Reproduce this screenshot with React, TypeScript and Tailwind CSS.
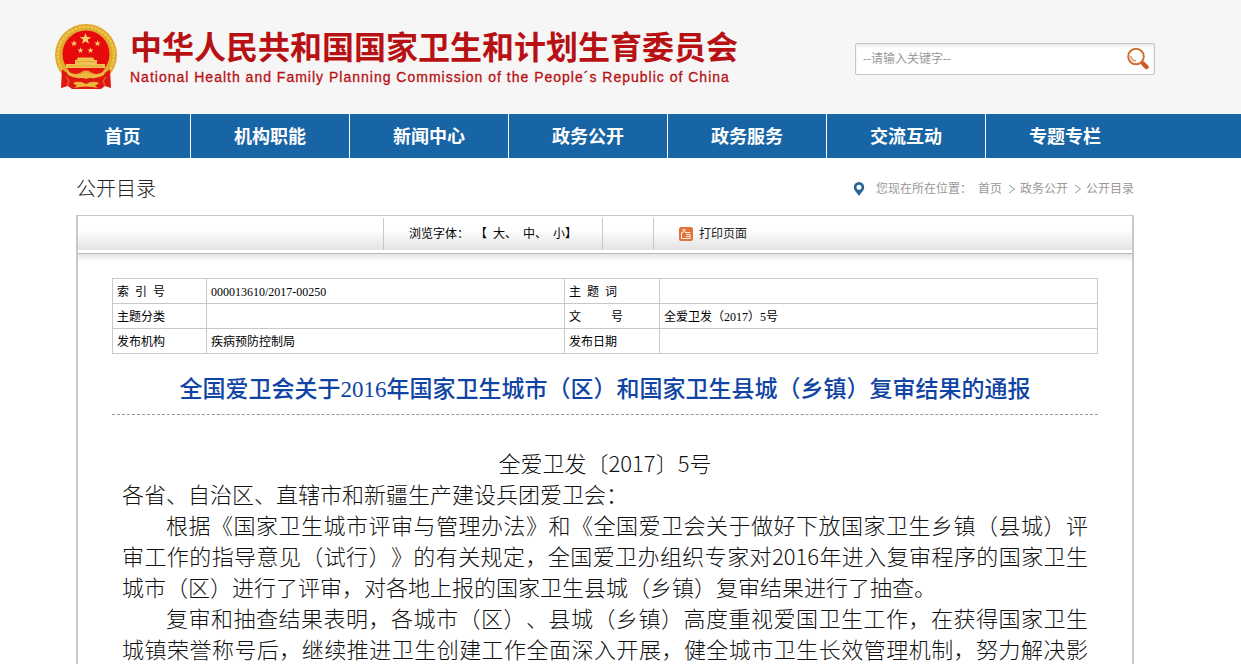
import React from 'react';

const navItems = ['机构职能', '新闻中心', '政务公开', '政务服务', '交流互动', '专题专栏'];

const infoRows = [
  ['索\u00a0\u00a0引\u00a0\u00a0号', '000013610/2017-00250', '主\u00a0\u00a0题\u00a0\u00a0词', ''],
  ['主题分类', '', '文\u3000\u3000\u00a0\u00a0号', '全爱卫发（2017）5号'],
  ['发布机构', '疾病预防控制局', '发布日期', ''],
];

const star = (cx: number, cy: number, r: number) =>
  Array.from({ length: 10 }, (_, i) => {
    const a = (Math.PI / 5) * i - Math.PI / 2;
    const d = i % 2 ? r * 0.4 : r;
    return `${(cx + d * Math.cos(a)).toFixed(2)},${(cy + d * Math.sin(a)).toFixed(2)}`;
  }).join(' ');

const Emblem = () => (
  <svg viewBox="0 0 62 66" className="w-[62px] h-[66px] shrink-0" aria-hidden="true">
    {/* wreath */}
    <circle cx="31" cy="31" r="31" fill="#e0a92c" />
    <circle cx="31" cy="31" r="28" fill="none" stroke="#edc650" strokeWidth="2.5" strokeDasharray="3 1" />
    <circle cx="31" cy="30" r="23.5" fill="#e60a0c" />
    {/* stars */}
    <polygon points={star(30.5, 15, 6)} fill="#f8cc6a" />
    <polygon points={star(19, 19.5, 3.4)} fill="#f8cc6a" />
    <polygon points={star(42.5, 19.5, 3.4)} fill="#f8cc6a" />
    <polygon points={star(25.5, 26.5, 3.2)} fill="#f8cc6a" />
    <polygon points={star(35.5, 26.5, 3.2)} fill="#f8cc6a" />
    {/* gate */}
    <path d="M23 33.5 H38 L39.500 36 H42 V40 H50 V44 H11 V40 H20 V36 H21.500 Z" fill="#f0c252" />
    <path d="M21 37.500 H41 M14 42 H48" stroke="#dc9c34" strokeWidth="0.8" />
    {/* drapery and cogwheel */}
    <path d="M7 45 Q12 50 18 51 L31 55 L44 51 Q50 50 55 45 L56 64 L50 62 L46 65 H17 L13 62 L6 64 Z" fill="#dc1812" />
    <path d="M12 44 H50 Q46 52 38 54 L31 50 L24 54 Q16 52 12 44 Z" fill="#e3170f" />
    <path d="M11 45 Q17 52 25 49 Q31 44 37 49 Q45 52 51 45 L49 51 Q42 55 36 54 H26 Q20 55 13 51 Z" fill="#edb840" />
    <path d="M25 50 Q31 46 37 50" fill="none" stroke="#c77c20" strokeWidth="0.8" strokeDasharray="1.500 1" />
    <path d="M11 53 L14 57 L12 62 M51 53 L48 57 L50 62" fill="none" stroke="#f2512c" strokeWidth="1.500" />
    <path d="M18 59 Q24 56 31 60 Q38 56 44 59 L40 62 L43 64 Q31 61 19 64 L22 62 Z" fill="#efb63c" />
  </svg>
);

const SearchIcon = () => (
  <svg viewBox="0 0 24 24" className="w-6 h-6" aria-hidden="true">
    <circle cx="10" cy="9.500" r="7.800" fill="none" stroke="#d07030" strokeWidth="2" />
    <path d="M4.800 9 Q5.500 13.500 10 14" fill="none" stroke="#d98a58" strokeWidth="1.500" />
    <path d="M15.500 15 L17 16.500" stroke="#cc5a20" strokeWidth="2.500" />
    <path d="M17.500 17 L20.500 20" stroke="#cc5a20" strokeWidth="4.500" strokeLinecap="round" />
  </svg>
);

const PinIcon = () => (
  <svg viewBox="0 0 12 14" className="w-3 h-[14px]" aria-hidden="true">
    <path
      d="M6 0 A5.200 5.200 0 0 0 0.800 5.200 C0.800 8.500 4 10.500 6 14 C8 10.500 11.200 8.500 11.200 5.200 A5.200 5.200 0 0 0 6 0 Z M6 2.800 A2.500 2.500 0 1 1 6 7.800 A2.500 2.500 0 1 1 6 2.800 Z"
      fill="#266398"
      fillRule="evenodd"
    />
  </svg>
);

const PrintIcon = () => (
  <svg viewBox="0 0 14 14" className="w-[14px] h-[14px]" aria-hidden="true">
    <rect width="14" height="14" rx="2" fill="#e2733c" />
    <path
      d="M2.500 11.500 V5.500 H4 V2.500 H6 V5.500 H11.500 M2.500 11.500 H11.500 M7 7.500 H11 V11 M7 9.500 H11"
      fill="none"
      stroke="#ffe9dc"
      strokeWidth="1"
    />
  </svg>
);

const Chevron = () => (
  <svg viewBox="0 0 8 10" className="w-2 h-[10px] ml-[6px] mr-1" aria-hidden="true">
    <path d="M1 1 L6.500 5 L1 9" fill="none" stroke="#999" strokeWidth="1" />
  </svg>
);

export default function App() {
  return (
    <div className="h-screen overflow-hidden flex flex-col bg-white text-black text-xs font-['Liberation_Serif','Noto_Sans_CJK_SC',sans-serif]">
      <header className="bg-[#f6f6f6] pr-[31px]">
        <div className="mx-auto max-w-[1100px] h-[114px] pt-1 flex items-center justify-between">
          <a href="#" className="flex items-center gap-[13px] pb-1 text-[#b81114]">
            <Emblem />
            <div>
              <h1 className="text-[32px] leading-10 font-bold font-['Noto_Sans_CJK_SC',sans-serif]">
                中华人民共和国国家卫生和计划生育委员会
              </h1>
              <p className="text-sm leading-6 tracking-[1px] [-webkit-text-stroke:0.3px] font-['Liberation_Sans',sans-serif]">
                National Health and Family Planning Commission of the People´s Republic of China
              </p>
            </div>
          </a>
          <form className="flex items-center w-[300px] h-8 pl-[7px] pr-1 bg-white border border-[#c6c6c6] rounded-xs shadow-[inset_0_2px_3px_#e8e8e8]">
            <input
              type="text"
              aria-label="关键字"
              placeholder="--请输入关键字--"
              className="flex-1 min-w-0 outline-none bg-transparent placeholder:text-[#999]"
            />
            <button type="button" aria-label="搜索">
              <SearchIcon />
            </button>
          </form>
        </div>
      </header>

      <nav className="bg-[#1865a6] pr-[31px]">
        <div className="mx-auto max-w-[1100px] h-11 flex text-lg font-bold text-white">
          <a href="#" className="w-[135px] pt-px flex items-center justify-center">首页</a>
          {navItems.map((item) => (
            <a key={item} href="#" className="w-[159px] pt-px flex items-center justify-center border-l border-white">
              {item}
            </a>
          ))}
        </div>
      </nav>

      <main className="flex-1 flex flex-col pr-[31px]">
        <div className="mx-auto w-full max-w-[1058px] flex-1 flex flex-col">
          <div className="h-[57px] pt-1 flex items-center justify-between">
            <h2 className="text-xl font-light text-[#222]">公开目录</h2>
            <div className="flex items-center text-[#999]">
              <PinIcon />
              <span className="ml-[11px] mr-[6px]">您现在所在位置：</span>
              <a href="#">首页</a>
              <Chevron />
              <a href="#">政务公开</a>
              <Chevron />
              <a href="#">公开目录</a>
            </div>
          </div>

          <div className="flex-1 border-x-2 border-t border-[#c8c8c8]">
            <div className="h-[38px] pb-[3px] border-b border-[#b8b8b8]">
              <div className="h-full pt-[2px] flex bg-linear-to-b from-white from-40% to-[#e3e3e3]">
                <div className="w-[305px]" />
                <div className="w-[219px] flex items-center justify-center gap-[6px] border-l border-[#c8c8c8] [text-spacing-trim:space-all]">
                  <span>浏览字体：</span>
                  <span className="flex gap-[6px]">
                    <span>【</span>
                    <button type="button">大、</button>
                    <button type="button">中、</button>
                    <button type="button">小】</button>
                  </span>
                </div>
                <div className="w-[51px] border-l border-[#c8c8c8]" />
                <div className="flex items-center pl-[25px] border-l border-[#c8c8c8]">
                  <button type="button" className="flex items-center gap-[6px] text-[#222]">
                    <PrintIcon />
                    打印页面
                  </button>
                </div>
              </div>
            </div>
            <div className="h-2 bg-linear-to-b from-[#e6e6e6] to-white" />

            <div className="px-[34px] pt-4">
              <table className="w-full table-fixed border-collapse">
                <colgroup>
                  <col className="w-[94px]" />
                  <col className="w-[358px]" />
                  <col className="w-[95px]" />
                  <col />
                </colgroup>
                <tbody>
                  {infoRows.map((row) => (
                    <tr key={row[0]} className="h-[25px]">
                      {row.map((cell, i) =>
                        i % 2 === 0 ? (
                          <th key={i} scope="row" className="border border-[#c8c8c8] px-1 pt-px text-left font-normal">{cell}</th>
                        ) : (
                          <td key={i} className="border border-[#c8c8c8] px-1 pt-px">{cell}</td>
                        )
                      )}
                    </tr>
                  ))}
                </tbody>
              </table>

              <h3 className="pt-5 pb-2 text-center text-[23px] leading-8 font-medium text-[#0f44a5] border-b border-dashed border-[#999] [text-spacing-trim:space-all]">
                全国爱卫会关于2016年国家卫生城市（区）和国家卫生县城（乡镇）复审结果的通报
              </h3>

              <article className="px-[10px] pt-8 text-[22px] leading-[31px] font-light text-justify text-[#111] font-['Noto_Sans_CJK_SC',sans-serif] [text-spacing-trim:space-all]">
                <p className="text-center">全爱卫发〔2017〕5号</p>
                <p>各省、自治区、直辖市和新疆生产建设兵团爱卫会：</p>
                <p className="indent-[2em]">
                  根据《国家卫生城市评审与管理办法》和《全国爱卫会关于做好下放国家卫生乡镇（县城）评审工作的指导意见（试行）》的有关规定，全国爱卫办组织专家对2016年进入复审程序的国家卫生城市（区）进行了评审，对各地上报的国家卫生县城（乡镇）复审结果进行了抽查。
                </p>
                <p className="indent-[2em] [text-align-last:justify]">
                  复审和抽查结果表明，各城市（区）、县城（乡镇）高度重视爱国卫生工作，在获得国家卫生城镇荣誉称号后，继续推进卫生创建工作全面深入开展，健全城市卫生长效管理机制，努力解决影
                </p>
              </article>
            </div>
          </div>
        </div>
      </main>
    </div>
  );
}
